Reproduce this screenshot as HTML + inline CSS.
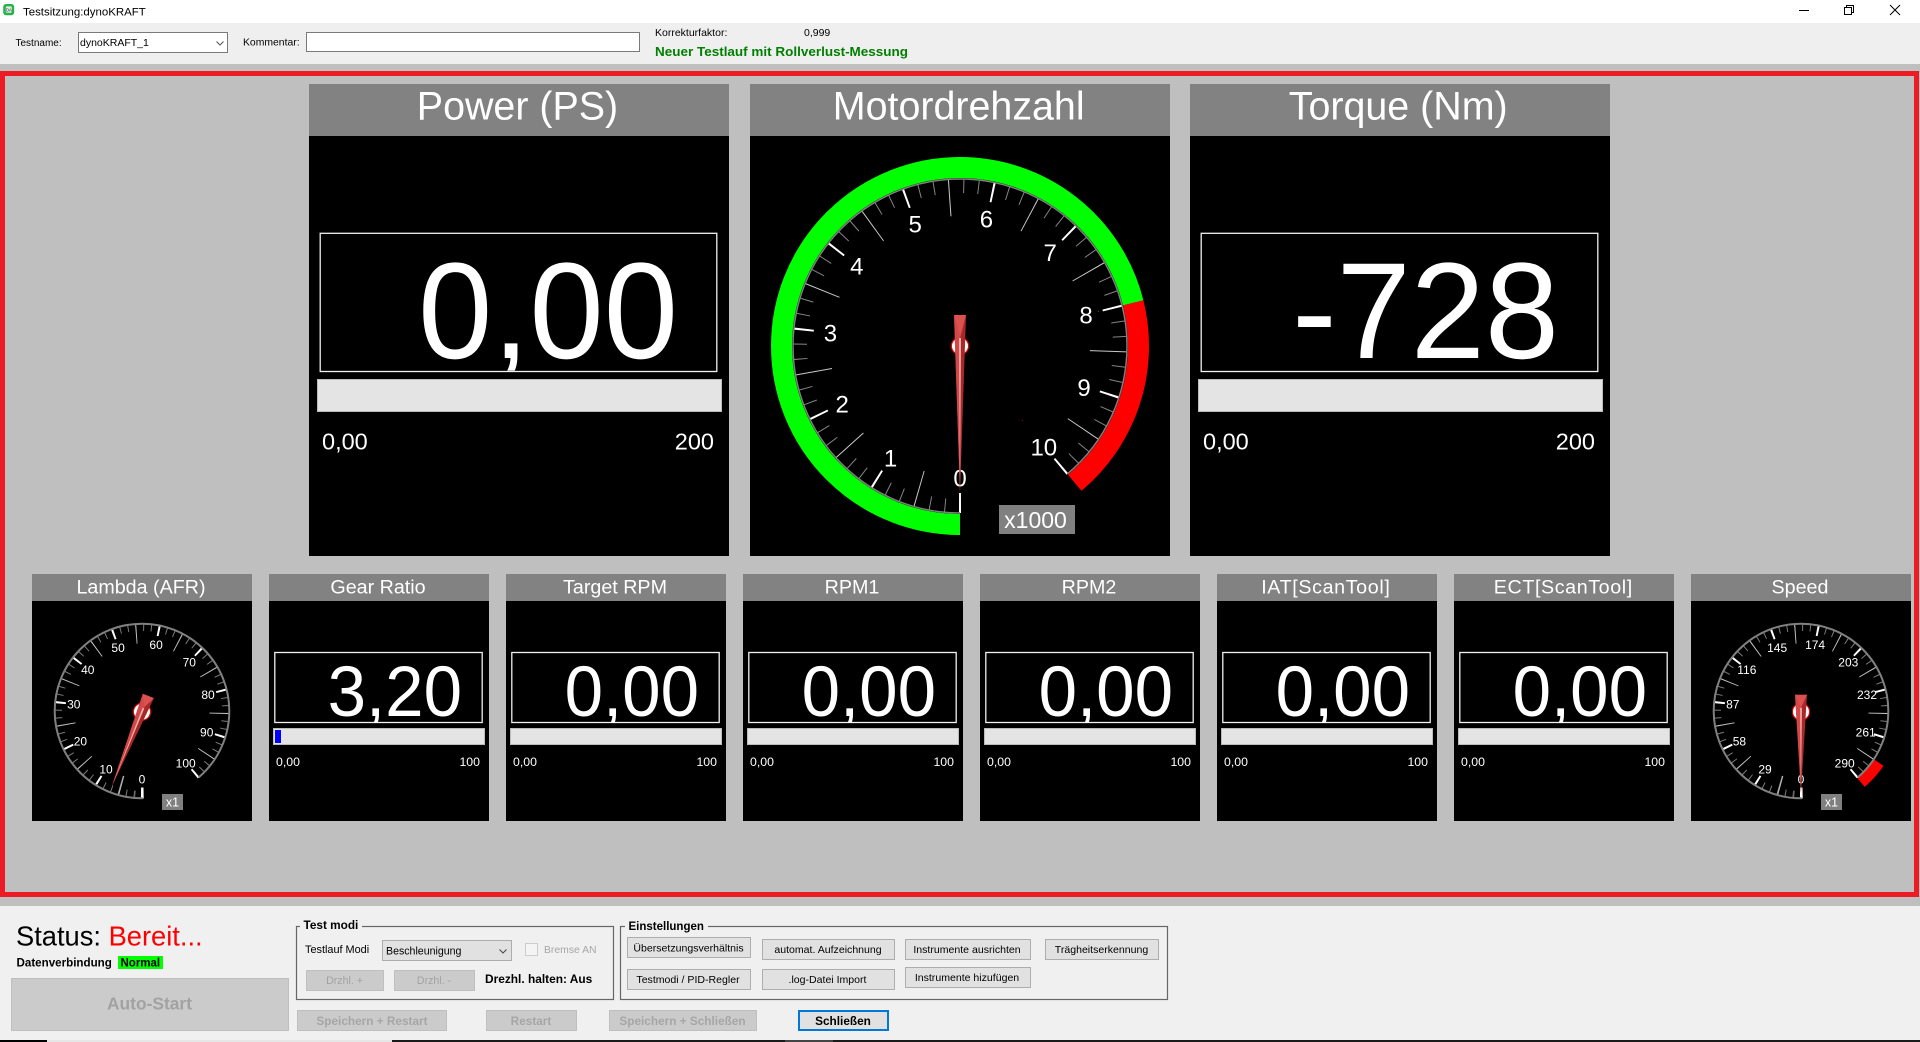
<!DOCTYPE html>
<html lang="de">
<head>
<meta charset="utf-8">
<title>Testsitzung:dynoKRAFT</title>
<style>
html,body{margin:0;padding:0;width:1920px;height:1042px;overflow:hidden;background:#bfbfbf}
svg{display:block}
text{font-family:"Liberation Sans",Arial,sans-serif}
.w{fill:#fff}
.m{text-anchor:middle}
.e{text-anchor:end}
.t1{font-size:39.4px;fill:#fff;text-anchor:middle}
.t2{font-size:19.7px;fill:#fff;text-anchor:middle}
.n1{font-size:137px;fill:#fff;text-anchor:end}
.n2{font-size:71px;fill:#fff;text-anchor:end}
.l1{font-size:23.5px;fill:#fff}
.l2{font-size:12.3px;fill:#fff}
.g1{font-size:24px;fill:#fff;text-anchor:middle}
.g2{font-size:12px;fill:#fff;text-anchor:middle}
.b{font-size:10.55px;fill:#000;text-anchor:middle}
.ui{font-size:10.4px;fill:#000}
.bd{font-weight:bold}
.dis{font-size:11.8px;font-weight:bold;fill:#a6a6a6;text-anchor:middle}
</style>
</head>
<body>
<svg width="1920" height="1042" viewBox="0 0 1920 1042" xmlns="http://www.w3.org/2000/svg">
<defs>
<g id="ticksB" fill="none">
  <circle r="157" stroke="#fff" stroke-width="20" pathLength="360" transform="rotate(90)" stroke-dashoffset=".365" stroke-dasharray=".73 31.27 .73 31.27 .73 31.27 .73 31.27 .73 31.27 .73 31.27 .73 31.27 .73 31.27 .73 31.27 .73 31.27 .73 39.27"/>
  <circle r="148.5" stroke="#c8c8c8" stroke-width="37" pathLength="360" transform="rotate(106)" stroke-dashoffset=".193" stroke-dasharray=".386 31.614 .386 31.614 .386 31.614 .386 31.614 .386 31.614 .386 31.614 .386 31.614 .386 31.614 .386 31.614 .386 71.614"/>
  <circle r="160" stroke="#858585" stroke-width="14" pathLength="360" transform="rotate(95.333)" stroke-dashoffset=".179" stroke-dasharray=".358 4.975 .358 10.309 .358 4.975 .358 10.309 .358 4.975 .358 10.309 .358 4.975 .358 10.309 .358 4.975 .358 10.309 .358 4.975 .358 10.309 .358 4.975 .358 10.309 .358 4.975 .358 10.309 .358 4.975 .358 10.309 .358 4.975 .358 10.309 .358 4.975 .358 10.309 .358 4.975 .358 10.309 .358 4.975 .358 10.309 .358 4.975 .358 10.309 .358 4.975 .358 10.309 .358 4.975 .358 10.309 .358 4.975 .358 10.309 .358 4.975 .358 10.309 .358 4.975 .358 10.309 .358 4.975 .358 50.309"/>
  <circle r="167" stroke="#808080" stroke-width="1.5" pathLength="360" transform="rotate(90)" stroke-dasharray="320 40"/>
</g>
<g id="ticksS" fill="none">
  <circle r="82" stroke="#fff" stroke-width="11" pathLength="360" transform="rotate(90)" stroke-dashoffset=".7" stroke-dasharray="1.4 30.6 1.4 30.6 1.4 30.6 1.4 30.6 1.4 30.6 1.4 30.6 1.4 30.6 1.4 30.6 1.4 30.6 1.4 30.6 1.4 38.6"/>
  <circle r="77.5" stroke="#c0c0c0" stroke-width="20" pathLength="360" transform="rotate(106)" stroke-dashoffset=".37" stroke-dasharray=".74 31.26 .74 31.26 .74 31.26 .74 31.26 .74 31.26 .74 31.26 .74 31.26 .74 31.26 .74 31.26 .74 71.26"/>
  <circle r="83.75" stroke="#7c7c7c" stroke-width="7.5" pathLength="360" transform="rotate(95.333)" stroke-dashoffset=".342" stroke-dasharray=".684 4.649 .684 9.983 .684 4.649 .684 9.983 .684 4.649 .684 9.983 .684 4.649 .684 9.983 .684 4.649 .684 9.983 .684 4.649 .684 9.983 .684 4.649 .684 9.983 .684 4.649 .684 9.983 .684 4.649 .684 9.983 .684 4.649 .684 9.983 .684 4.649 .684 9.983 .684 4.649 .684 9.983 .684 4.649 .684 9.983 .684 4.649 .684 9.983 .684 4.649 .684 9.983 .684 4.649 .684 9.983 .684 4.649 .684 9.983 .684 4.649 .684 9.983 .684 4.649 .684 9.983 .684 4.649 .684 49.983"/>
  <circle r="87.3" stroke="#808080" stroke-width="2" pathLength="360" transform="rotate(90)" stroke-dasharray="320 40"/>
</g>
<g id="needleB">
  <circle r="8.6" fill="#fff" stroke="#e00000" stroke-width="1.2"/>
  <polygon points="-6,-31 6,-31 0,147" fill="#a82828"/>
  <polygon points="-6,-31 0,-8 0,147" fill="#d24848"/>
  <polygon points="-6,-31 6,-31 0,-8" fill="#dc5050"/>
  <polygon points="-1,-8 1,-8 0,147" fill="#eeb0b0"/>
</g>
<g id="needleS">
  <circle r="8.6" fill="#fff" stroke="#e00000" stroke-width="1.2"/>
  <polygon points="-6,-17 6,-17 0,81" fill="#a82828"/>
  <polygon points="-6,-17 0,-4 0,81" fill="#d24848"/>
  <polygon points="-6,-17 6,-17 0,-4" fill="#dc5050"/>
  <polygon points="-.9,-4 .9,-4 0,81" fill="#eeb0b0"/>
</g>
<g id="panelS">
  <rect x="0" y="0" width="220" height="27" fill="#828282"/>
  <rect x="0" y="27" width="220" height="220" fill="#000"/>
</g>
<g id="panelV">
  <use href="#panelS"/>
  <rect x="5.8" y="78.5" width="207.4" height="70" fill="#000" stroke="#f0f0f0" stroke-width="1.3"/>
  <rect x="4.5" y="154.5" width="211" height="16" fill="#e4e4e4" stroke="#bbb" stroke-width="1"/>
</g>
<g id="panelB">
  <rect x="0" y="0" width="420" height="52" fill="#828282"/>
  <rect x="0" y="52" width="420" height="420" fill="#000"/>
</g>
<g id="panelBV">
  <use href="#panelB"/>
  <rect x="11.2" y="149.3" width="396.6" height="138.2" fill="#000" stroke="#f0f0f0" stroke-width="1.3"/>
  <rect x="8.5" y="295.5" width="404" height="32" fill="#e4e4e4" stroke="#bbb" stroke-width="1"/>
</g>
<clipPath id="cp1"><rect x="321" y="234" width="395" height="136.6"/></clipPath>
<clipPath id="cs"><rect x="0" y="652" width="1920" height="70.6"/></clipPath>
</defs>

<!-- window -->
<rect x="0" y="0" width="1920" height="23" fill="#fff"/>
<rect x="0" y="23" width="1920" height="41" fill="#efefef"/>
<rect x="3.2" y="4" width="11" height="11.2" rx="2.8" fill="#26b34a"/>
<rect x="5.8" y="6.4" width="6" height="6.4" rx="1" fill="#dfeee3"/>
<text x="6" y="11.3" font-size="4.2" fill="#222">DA</text>
<text x="23" y="15.5" font-size="11.45" fill="#000">Testsitzung:dynoKRAFT</text>
<rect x="1799" y="10" width="10" height="1" fill="#000"/>
<path d="M1846.5 7.5V5.5H1853.5V12.5H1851.5" fill="none" stroke="#000" stroke-width="1"/>
<rect x="1844.5" y="7.5" width="7" height="7" fill="none" stroke="#000" stroke-width="1"/>
<path d="M1890 5L1900 15M1900 5L1890 15" stroke="#000" stroke-width="1" fill="none"/>

<text x="15.5" y="46" class="ui" style="font-size:10px">Testname:</text>
<rect x="78.5" y="32.5" width="149" height="20" fill="#fff" stroke="#7a7a7a"/>
<text x="80" y="46" class="ui" style="font-size:10.5px">dynoKRAFT_1</text>
<path d="M216.5 41.5L220 45L223.5 41.5" fill="none" stroke="#555" stroke-width="1"/>
<text x="243" y="45.5" class="ui">Kommentar:</text>
<rect x="306.5" y="32.5" width="333" height="19" fill="#fff" stroke="#7a7a7a"/>
<text x="655" y="36" class="ui" style="font-size:10.5px">Korrekturfaktor:</text>
<text x="804" y="36" class="ui" style="font-size:10.5px">0,999</text>
<text x="655" y="56" font-size="12.6" font-weight="bold" fill="#008000" textLength="253" lengthAdjust="spacingAndGlyphs">Neuer Testlauf mit Rollverlust-Messung</text>

<!-- red frame -->
<rect x="2.5" y="73.5" width="1914" height="821" fill="none" stroke="#ed1c24" stroke-width="5"/>

<!-- big panels -->
<use href="#panelBV" x="309" y="84"/>
<text x="517.5" y="119.7" class="t1">Power (PS)</text>
<g clip-path="url(#cp1)"><text transform="translate(678 358) scale(.975 1)" class="n1">0,00</text></g>
<text x="322" y="449.5" class="l1">0,00</text>
<text x="714" y="449.5" class="l1 e">200</text>

<use href="#panelB" x="750" y="84"/>
<text x="958.7" y="119.7" class="t1">Motordrehzahl</text>

<g transform="translate(960 346)">
  <circle r="178.5" fill="none" stroke="#00ff00" stroke-width="21" pathLength="360" transform="rotate(90)" stroke-dasharray="256 104"/>
  <circle r="178.5" fill="none" stroke="#ff0000" stroke-width="21" pathLength="360" transform="rotate(346)" stroke-dasharray="64 296"/>
  <use href="#ticksB"/>
  <text class="g1" x="0" y="140.3">0</text>
  <text class="g1" x="-69.4" y="120.4">1</text>
  <text class="g1" x="-117.8" y="66.7">2</text>
  <text class="g1" x="-129.6" y="-4.3">3</text>
  <text class="g1" x="-103.2" y="-71.4">4</text>
  <text class="g1" x="-44.8" y="-113.6">5</text>
  <text class="g1" x="26.4" y="-118.6">6</text>
  <text class="g1" x="90.2" y="-84.9">7</text>
  <text class="g1" x="126" y="-22.4">8</text>
  <text class="g1" x="124" y="49.8">9</text>
  <text class="g1" x="83.8" y="109.6">10</text>
  <use href="#needleB"/>
</g>
<rect x="999" y="505" width="76" height="29" fill="#808080"/>
<text x="1035.5" y="528" font-size="23" fill="#fff" text-anchor="middle">x1000</text>
<rect x="1022" y="420" width="1" height="1" fill="#900"/>
<rect x="1098" y="311" width="1" height="1" fill="#070"/>

<use href="#panelBV" x="1190" y="84"/>
<text x="1398.2" y="119.7" class="t1">Torque (Nm)</text>
<text transform="translate(1559 358) scale(.973 1)" class="n1">-728</text>
<text x="1203" y="449.5" class="l1">0,00</text>
<text x="1595" y="449.5" class="l1 e">200</text>

<!-- small row -->
<use href="#panelS" x="32" y="574"/>
<text x="141" y="593.5" class="t2">Lambda (AFR)</text>
<g transform="translate(142 711)">
  <use href="#ticksS"/>
  <text class="g2" x="0" y="72.6">0</text>
  <text class="g2" x="-36" y="62.3">10</text>
  <text class="g2" x="-61.6" y="34.4">20</text>
  <text class="g2" x="-68.2" y="-2.5">30</text>
  <text class="g2" x="-54.2" y="-37.2">40</text>
  <text class="g2" x="-23.9" y="-59.2">50</text>
  <text class="g2" x="14.1" y="-61.8">60</text>
  <text class="g2" x="47.3" y="-44.3">70</text>
  <text class="g2" x="66" y="-12.1">80</text>
  <text class="g2" x="64.7" y="25.5">90</text>
  <text class="g2" x="43.7" y="56.6">100</text>
  <use href="#needleS" transform="translate(0 .7) rotate(22)"/>
</g>
<rect x="162" y="794" width="21" height="16" fill="#808080"/>
<text x="172.5" y="806.5" font-size="12.5" fill="#fff" text-anchor="middle">x1</text>

<use href="#panelV" x="269" y="574"/>
<text x="378" y="593.5" class="t2">Gear Ratio</text>
<g clip-path="url(#cs)"><text transform="translate(462 716) scale(.973 1)" class="n2">3,20</text></g>
<rect x="275" y="730" width="6" height="13" fill="#0000ff"/>
<text x="276" y="766" class="l2">0,00</text>
<text x="480" y="766" class="l2 e">100</text>

<use href="#panelV" x="506" y="574"/>
<text x="615" y="593.5" class="t2">Target RPM</text>
<g clip-path="url(#cs)"><text transform="translate(699 716) scale(.973 1)" class="n2">0,00</text></g>
<text x="513" y="766" class="l2">0,00</text>
<text x="717" y="766" class="l2 e">100</text>

<use href="#panelV" x="743" y="574"/>
<text x="852" y="593.5" class="t2">RPM1</text>
<g clip-path="url(#cs)"><text transform="translate(936 716) scale(.973 1)" class="n2">0,00</text></g>
<text x="750" y="766" class="l2">0,00</text>
<text x="954" y="766" class="l2 e">100</text>

<use href="#panelV" x="980" y="574"/>
<text x="1089" y="593.5" class="t2">RPM2</text>
<g clip-path="url(#cs)"><text transform="translate(1173 716) scale(.973 1)" class="n2">0,00</text></g>
<text x="987" y="766" class="l2">0,00</text>
<text x="1191" y="766" class="l2 e">100</text>

<use href="#panelV" x="1217" y="574"/>
<text x="1325.5" y="593.5" class="t2" textLength="128.6" lengthAdjust="spacing">IAT[ScanTool]</text>
<g clip-path="url(#cs)"><text transform="translate(1410 716) scale(.973 1)" class="n2">0,00</text></g>
<text x="1224" y="766" class="l2">0,00</text>
<text x="1428" y="766" class="l2 e">100</text>

<use href="#panelV" x="1454" y="574"/>
<text x="1563" y="593.5" class="t2" textLength="138.4" lengthAdjust="spacing">ECT[ScanTool]</text>
<g clip-path="url(#cs)"><text transform="translate(1647 716) scale(.973 1)" class="n2">0,00</text></g>
<text x="1461" y="766" class="l2">0,00</text>
<text x="1665" y="766" class="l2 e">100</text>

<use href="#panelS" x="1691" y="574"/>
<text x="1800" y="593.5" class="t2">Speed</text>
<g transform="translate(1801 711)">
  <circle r="93.5" fill="none" stroke="#ff0000" stroke-width="11" pathLength="360" transform="rotate(34)" stroke-dasharray="16 344"/>
  <use href="#ticksS"/>
  <text class="g2" x="0" y="72.6">0</text>
  <text class="g2" x="-36" y="62.3">29</text>
  <text class="g2" x="-61.6" y="34.4">58</text>
  <text class="g2" x="-68.2" y="-2.5">87</text>
  <text class="g2" x="-54.2" y="-37.2">116</text>
  <text class="g2" x="-23.9" y="-59.2">145</text>
  <text class="g2" x="14.1" y="-61.8">174</text>
  <text class="g2" x="47.3" y="-44.3">203</text>
  <text class="g2" x="66" y="-12.1">232</text>
  <text class="g2" x="64.7" y="25.5">261</text>
  <text class="g2" x="43.7" y="56.6">290</text>
  <use href="#needleS" transform="translate(0 .7)"/>
</g>
<rect x="1821" y="794" width="21" height="16" fill="#808080"/>
<text x="1831.5" y="806.5" font-size="12.5" fill="#fff" text-anchor="middle">x1</text>

<!-- bottom panel -->
<rect x="0" y="906" width="1920" height="134" fill="#f0f0f0"/>
<text x="16" y="945.7" font-size="27.3" fill="#000">Status: <tspan fill="#ff0000">Bereit...</tspan></text>
<text x="16.5" y="966.5" font-size="11.6" font-weight="bold" fill="#000">Datenverbindung</text>
<rect x="118" y="956" width="45" height="13" fill="#00ff00"/>
<text x="120.5" y="966.5" font-size="11.5" font-weight="bold" fill="#000">Normal</text>
<rect x="11.5" y="978.5" width="277" height="52" fill="#cbcbcb" stroke="#bfbfbf"/>
<text x="149.5" y="1009.5" font-size="17.4" font-weight="bold" fill="#a2a2a2" text-anchor="middle">Auto-Start</text>

<!-- Test modi -->
<rect x="296.5" y="926.5" width="317" height="73" fill="none" stroke="#666" stroke-width="1.2"/>
<rect x="300" y="920" width="62" height="12" fill="#f0f0f0"/>
<text x="303.5" y="929" font-size="11.8" font-weight="bold" fill="#000">Test modi</text>
<text x="305" y="953" class="ui" style="font-size:10.9px">Testlauf Modi</text>
<rect x="382.5" y="940.5" width="129" height="20" fill="#e1e1e1" stroke="#adadad"/>
<text x="386" y="954.3" class="ui" style="font-size:10.6px">Beschleunigung</text>
<path d="M499.5 949.5L503 953L506.5 949.5" fill="none" stroke="#444" stroke-width="1"/>
<rect x="525.5" y="943.5" width="12" height="12" fill="#f4f4f4" stroke="#ccc"/>
<text x="544" y="953" class="ui" style="font-size:10.4px;fill:#a6a6a6">Bremse AN</text>
<rect x="306.5" y="970.5" width="77" height="20" fill="#cbcbcb" stroke="#bfbfbf"/>
<text x="344.5" y="984" font-size="10.6" fill="#a2a2a2" text-anchor="middle">Drzhl. +</text>
<rect x="394.5" y="970.5" width="80" height="20" fill="#cbcbcb" stroke="#bfbfbf"/>
<text x="434" y="984" font-size="10.6" fill="#a2a2a2" text-anchor="middle">Drzhl. -</text>
<text x="485" y="983" font-size="11.9" font-weight="bold" fill="#000">Drezhl. halten: Aus</text>

<rect x="297.5" y="1010.5" width="149" height="20" fill="#cbcbcb" stroke="#bfbfbf"/>
<text x="372" y="1025" class="dis">Speichern + Restart</text>
<rect x="486.5" y="1010.5" width="90" height="20" fill="#cbcbcb" stroke="#bfbfbf"/>
<text x="531" y="1025" class="dis">Restart</text>
<rect x="609.5" y="1010.5" width="147" height="20" fill="#cbcbcb" stroke="#bfbfbf"/>
<text x="682.5" y="1025" font-size="11.9" class="dis">Speichern + Schließen</text>
<rect x="799" y="1011" width="89" height="19" fill="#e1e1e1" stroke="#0078d7" stroke-width="2"/>
<text x="843" y="1025" font-size="11.8" font-weight="bold" fill="#000" text-anchor="middle">Schließen</text>

<!-- Einstellungen -->
<rect x="620.5" y="926.5" width="547" height="73" fill="none" stroke="#666" stroke-width="1.2"/>
<rect x="625" y="920" width="83" height="12" fill="#f0f0f0"/>
<text x="628.5" y="930" font-size="11.5" font-weight="bold" fill="#000">Einstellungen</text>

<rect x="627.5" y="937.5" width="123" height="20" fill="#e1e1e1" stroke="#adadad"/>
<text x="688.5" y="951.5" class="b">Übersetzungsverhältnis</text>
<rect x="762.5" y="939.5" width="132" height="20" fill="#e1e1e1" stroke="#adadad"/>
<text x="828" y="953" class="b">automat. Aufzeichnung</text>
<rect x="905.5" y="939.5" width="125" height="20" fill="#e1e1e1" stroke="#adadad"/>
<text x="967" y="953" class="b">Instrumente ausrichten</text>
<rect x="1045.5" y="939.5" width="113" height="20" fill="#e1e1e1" stroke="#adadad"/>
<text x="1101.5" y="953" class="b">Trägheitserkennung</text>
<rect x="627.5" y="969.5" width="123" height="20" fill="#e1e1e1" stroke="#adadad"/>
<text x="688" y="983" class="b">Testmodi / PID-Regler</text>
<rect x="762.5" y="969.5" width="132" height="20" fill="#e1e1e1" stroke="#adadad"/>
<text x="827.5" y="983" class="b">.log-Datei Import</text>
<rect x="905.5" y="967.5" width="125" height="20" fill="#e1e1e1" stroke="#adadad"/>
<text x="967" y="981" class="b">Instrumente hizufügen</text>

<!-- taskbar strip -->
<rect x="0" y="1040" width="1920" height="2" fill="#1a1a1a"/>
<rect x="0" y="1040" width="47" height="2" fill="#000"/>
<rect x="47" y="1040" width="345" height="2" fill="#e6e6e6"/>
<rect x="785" y="1040" width="48" height="2" fill="#444"/>
</svg>
</body>
</html>
